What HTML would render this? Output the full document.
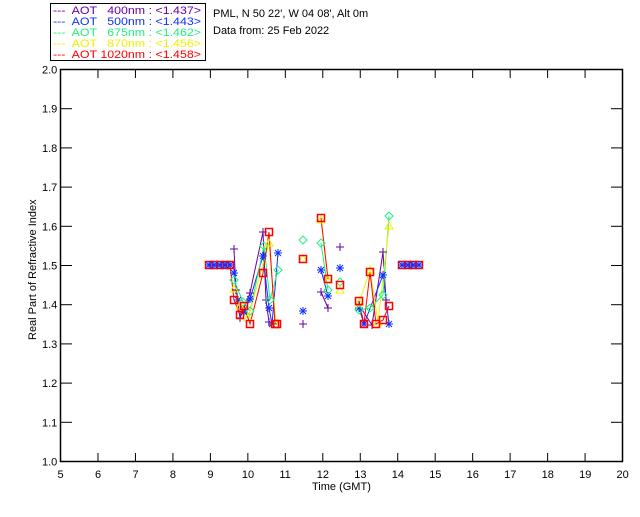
<!DOCTYPE html>
<html><head><meta charset="utf-8"><style>
body{margin:0;background:#fff;width:640px;height:512px;overflow:hidden}
svg text{font-family:"Liberation Sans",sans-serif;font-size:11px}
</style></head><body>
<svg width="640" height="512" xmlns="http://www.w3.org/2000/svg">
<rect x="50.5" y="3.5" width="155" height="57" fill="none" stroke="#000"/>
<g font-size="12">
<text x="53" y="14" fill="#6a00a0" textLength="148" lengthAdjust="spacingAndGlyphs" xml:space="preserve">---  AOT   400nm : &lt;1.437&gt;</text>
<text x="53" y="25" fill="#1030ff" textLength="148" lengthAdjust="spacingAndGlyphs" xml:space="preserve">---  AOT   500nm : &lt;1.443&gt;</text>
<text x="53" y="36" fill="#20f080" textLength="148" lengthAdjust="spacingAndGlyphs" xml:space="preserve">---  AOT   675nm : &lt;1.462&gt;</text>
<text x="53" y="47" fill="#f0f000" textLength="148" lengthAdjust="spacingAndGlyphs" xml:space="preserve">---  AOT   870nm : &lt;1.456&gt;</text>
<text x="53" y="58" fill="#ff0000" textLength="148" lengthAdjust="spacingAndGlyphs" xml:space="preserve">---  AOT 1020nm : &lt;1.458&gt;</text>
<text x="213" y="17" fill="#000">PML, N 50 22', W 04 08', Alt 0m</text>
<text x="213" y="34" fill="#000">Data from: 25 Feb 2022</text>
</g>
<rect x="60.5" y="69.5" width="562" height="392" fill="none" stroke="#000" stroke-width="1.5"/>
<g stroke="#000" id="tk"></g>
<g id="lab" font-size="10"></g>
<text x="312" y="490" font-size="10">Time (GMT)</text>
<text transform="translate(36,340) rotate(-90)" font-size="10">Real Part of Refractive Index</text>
<g id="data" fill="none" stroke-width="1"></g>
</svg>
<script>
const NS="http://www.w3.org/2000/svg";
const tk=document.getElementById('tk'),lab=document.getElementById('lab'),dt=document.getElementById('data');
function el(p,t,a){const e=document.createElementNS(NS,t);for(const k in a)e.setAttribute(k,a[k]);p.appendChild(e);return e}
for(let h=5;h<=20;h++){const x=60.5+(h-5)*37.47;
 if(h>5&&h<20){el(tk,'line',{x1:x,y1:461,x2:x,y2:453});el(tk,'line',{x1:x,y1:70,x2:x,y2:78});}
 const t=el(lab,'text',{x:x-(h>=10?6:3),y:478});t.textContent=h;}
for(let i=0;i<=10;i++){const y=461.5-i*39.2;
 if(i>0&&i<10){el(tk,'line',{x1:61,y1:y,x2:72,y2:y});el(tk,'line',{x1:622,y1:y,x2:611,y2:y});}
 const t=el(lab,'text',{x:42,y:y+4});t.textContent=(1+i/10).toFixed(1);}
function line(c,pts){el(dt,'polyline',{points:pts.map(p=>p.join(',')).join(' '),stroke:c});}
function sq(c,pts){pts.forEach(p=>el(dt,'rect',{x:p[0]-3.5,y:p[1]-3.5,width:7,height:7,stroke:c,'stroke-width':1.5}));}
function plus(c,pts){pts.forEach(p=>{el(dt,'path',{d:`M${p[0]-4} ${p[1]}h8M${p[0]} ${p[1]-4}v8`,stroke:c})});}
function ast(c,pts){pts.forEach(p=>{el(dt,'path',{d:`M${p[0]-4} ${p[1]}h8M${p[0]} ${p[1]-4}v8M${p[0]-3} ${p[1]-3}l6 6M${p[0]-3} ${p[1]+3}l6 -6`,stroke:c})});}
function dia(c,pts){pts.forEach(p=>el(dt,'path',{d:`M${p[0]} ${p[1]-4}l4 4l-4 4l-4 -4z`,stroke:c}));}
function tri(c,pts){pts.forEach(p=>el(dt,'path',{d:`M${p[0]} ${p[1]-4}l4 7h-8z`,stroke:c}));}
const P=[[234,249],[236,290],[240,318],[250,293],[263,232],[266,300],[269,322],[303,324],[321,292],[328,308],[340,247],[359,305],[372,325],[383,252],[386,300]];
const B=[[234,273],[238,300],[244,312],[250,299],[263,256],[269,308],[272,324],[278,253],[303,311],[321,270],[328,296],[340,268],[359,308],[364,324],[383,275],[389,324]];
const G=[[234,280],[243,302],[250,311],[264,246],[270,300],[278,270],[303,240],[321,243],[328,290],[340,282],[359,310],[370,308],[383,295],[389,216]];
const Y=[[234,289],[240,306],[248,318],[269,243],[276,324],[303,259],[321,220],[328,280],[340,290],[359,303],[370,270],[378,322],[389,226]];
const R=[[209,265],[214,265],[220,265],[225,265],[230,265],[234,300],[240,315],[244,306],[250,324],[263,273],[269,232],[275,324],[277,324],[303,259],[321,218],[328,279],[340,285],[359,301],[364,324],[370,272],[376,324],[383,320],[389,306],[402,265],[408,265],[413,265],[419,265]];
line('#6a00a0',P.slice(0,7));line('#6a00a0',[[321,292],[328,308]]);line('#6a00a0',[[359,305],[372,325],[383,252],[386,300]]);
line('#1030ff',B.slice(0,8));line('#1030ff',[[321,270],[328,296]]);line('#1030ff',[[359,308],[364,324],[383,275],[389,324]]);
line('#20f080',G.slice(0,6));line('#20f080',[[321,243],[328,290]]);line('#20f080',[[359,310],[370,308],[383,295],[389,216]]);
line('#f0f000',Y.slice(0,5));line('#f0f000',[[321,220],[328,280]]);line('#f0f000',[[359,303],[370,270],[378,322],[389,226]]);
line('#ff0000',R.slice(4,13));line('#ff0000',[[321,218],[328,279]]);line('#ff0000',[[359,301],[364,324],[370,272],[376,324],[383,320],[389,306]]);
plus('#6a00a0',P);ast('#1030ff',B);dia('#20f080',G);tri('#f0f000',Y);sq('#ff0000',R);
[[209,265],[214,265],[220,265],[225,265],[230,265],[402,265],[408,265],[413,265],[419,265]].forEach(p=>{ast('#1030ff',[p]);});
</script>
</body></html>
